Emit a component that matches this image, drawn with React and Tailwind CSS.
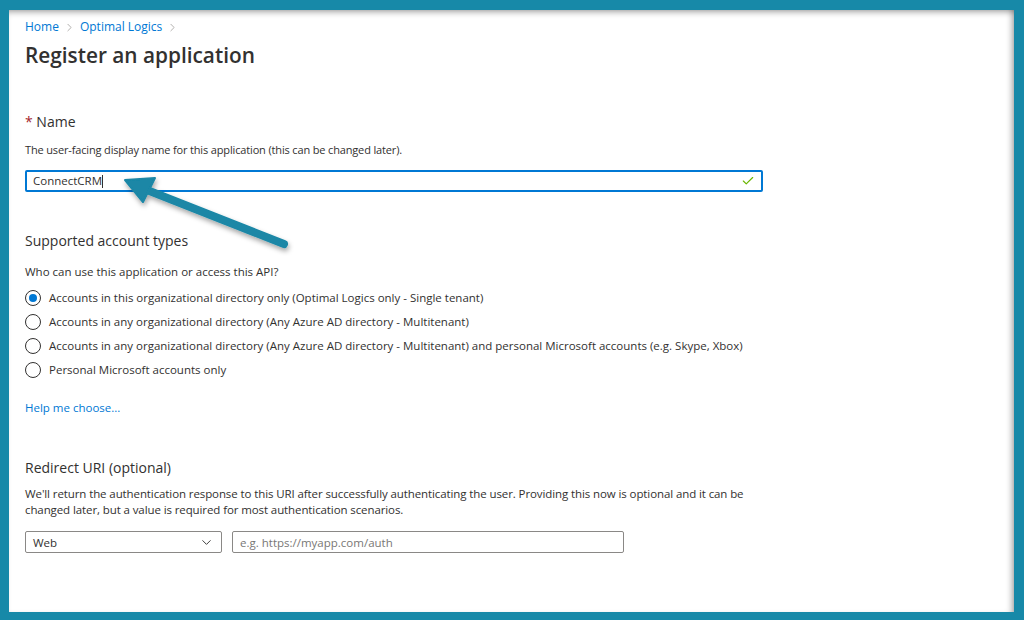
import { Check, ChevronDown, ChevronRight } from "lucide-react";

const radios = [
  "Accounts in this organizational directory only (Optimal Logics only - Single tenant)",
  "Accounts in any organizational directory (Any Azure AD directory - Multitenant)",
  "Accounts in any organizational directory (Any Azure AD directory - Multitenant) and personal Microsoft accounts (e.g. Skype, Xbox)",
  "Personal Microsoft accounts only",
];

const Arrow = () => (
  <svg className="absolute left-[100px] top-[160px]" width="200" height="100" viewBox="0 0 200 100">
    <defs>
      <filter id="sh" x="-20%" y="-20%" width="140%" height="160%">
        <feDropShadow dx="1" dy="3" stdDeviation="2.5" floodColor="#000" floodOpacity="0.35" />
      </filter>
    </defs>
    <g filter="url(#sh)" fill="#1a87a6" stroke="#1a87a6" strokeLinecap="round" strokeLinejoin="round">
      <line x1="175" y1="74" x2="38" y2="20" strokeWidth="8" />
      <polygon points="16,10 46,8 34,32" strokeWidth="2" />
    </g>
  </svg>
);

const App = () => {
  const font = { fontFamily: '"Open Sans", "Noto Sans", sans-serif' };
  return (
    <div className="w-[1024px] h-[620px] bg-[#1789a8] pt-[10px] pl-[9px] pr-[10px] pb-[8px]" style={font}>
      <div className="relative h-full bg-white shadow-[inset_0_6px_6px_-4px_rgba(0,0,0,0.35),inset_-6px_0_6px_-4px_rgba(0,0,0,0.35)] pl-[16px] text-[#323130]">
        <div className="flex items-center gap-[4px] pt-[8px] text-[12px] text-[#0078d4]">
          <span>Home</span>
          <ChevronRight size={13} strokeWidth={1.5} className="text-[#a19f9d]" />
          <span>Optimal Logics</span>
          <ChevronRight size={13} strokeWidth={1.5} className="text-[#a19f9d]" />
        </div>
        <h1 className="mt-[5px] text-[20.8px] font-semibold leading-[28px] text-[#323130]">Register an application</h1>

        <div className="mt-[43px] text-[14px] leading-[20px]">
          <span className="text-[#a4262c]">*</span> Name
        </div>
        <p className="mt-[10px] text-[11px] tracking-[-0.15px] leading-[16px]">The user-facing display name for this application (this can be changed later).</p>
        <div className="mt-[12px] w-[738px] h-[22px] border-2 border-[#0078d4] rounded-[2px] flex items-center justify-between px-[6px]">
          <span className="text-[11.5px] flex items-center">ConnectCRM<span className="w-px h-[13px] bg-[#323130]" /></span>
          <Check size={14} strokeWidth={2} className="text-[#6bb700]" />
        </div>

        <div className="mt-[39px] text-[14px] leading-[20px]">Supported account types</div>
        <p className="mt-[13px] text-[11.5px] leading-[16px]">Who can use this application or access this API?</p>
        <div className="mt-[10px] flex flex-col gap-[8px]">
          {radios.map((r, i) => (
            <div key={i} className="flex items-center gap-[8px] h-[16px]">
              <span className="w-[16px] h-[16px] rounded-full border border-[#323130] flex items-center justify-center shrink-0">
                {i === 0 && <span className="w-[8px] h-[8px] rounded-full bg-[#0078d4]" />}
              </span>
              <span className="text-[11.5px]">{r}</span>
            </div>
          ))}
        </div>
        <div className="mt-[21px] text-[11.5px] text-[#0078d4]">Help me choose...</div>

        <div className="mt-[42px] text-[14px] leading-[20px]">Redirect URI (optional)</div>
        <p className="mt-[8px] w-[740px] text-[11.5px] tracking-[-0.1px] leading-[16px]">
          We'll return the authentication response to this URI after successfully authenticating the user. Providing this now is optional and it can be changed later, but a value is required for most authentication scenarios.
        </p>
        <div className="mt-[13px] flex gap-[10px]">
          <div className="w-[197px] h-[22px] border border-[#8a8886] rounded-[2px] flex items-center justify-between px-[7px] text-[11.5px]">
            <span>Web</span>
            <ChevronDown size={15} strokeWidth={1.5} />
          </div>
          <div className="w-[392px] h-[22px] border border-[#8a8886] rounded-[2px] flex items-center px-[7px] text-[11.5px] text-[#797775]">
            e.g. https://myapp.com/auth
          </div>
        </div>

        <Arrow />
      </div>
    </div>
  );
};

export default App;
